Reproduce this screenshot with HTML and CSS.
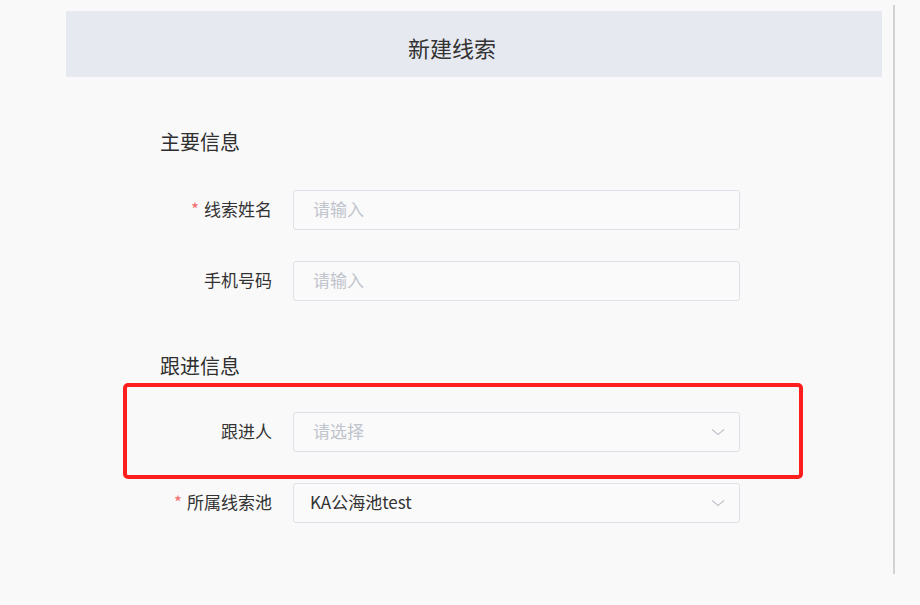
FILE: index.html
```html
<!DOCTYPE html>
<html lang="zh-CN">
<head>
    <meta charset="UTF-8">
    <meta name="viewport" content="width=device-width, initial-scale=1.0">
    <title>新建线索</title>
    <link rel="stylesheet" href="styles.css">
</head>
<body>

    <div class="panel">
        <div class="panel-header">
            <h1 class="title">新建线索</h1>
        </div>

        <div class="form">
            <h2 class="section-title">主要信息</h2>

            <div class="form-row">
                <label class="form-label"><span class="required">*</span>线索姓名</label>
                <div class="input">
                    <span class="placeholder">请输入</span>
                </div>
            </div>

            <div class="form-row">
                <label class="form-label">手机号码</label>
                <div class="input">
                    <span class="placeholder">请输入</span>
                </div>
            </div>

            <h2 class="section-title section-gap">跟进信息</h2>

            <div class="form-row">
                <label class="form-label">跟进人</label>
                <div class="input select">
                    <span class="placeholder">请选择</span>
                    <svg class="arrow" width="14" height="8" viewBox="0 0 14 8">
                        <path d="M1 1.5 L7 6.5 L13 1.5" fill="none" stroke="#c0c4cc" stroke-width="1.2"/>
                    </svg>
                </div>
            </div>

            <div class="form-row">
                <label class="form-label"><span class="required">*</span>所属线索池</label>
                <div class="input select">
                    <span class="value">KA公海池test</span>
                    <svg class="arrow" width="14" height="8" viewBox="0 0 14 8">
                        <path d="M1 1.5 L7 6.5 L13 1.5" fill="none" stroke="#c0c4cc" stroke-width="1.2"/>
                    </svg>
                </div>
            </div>
        </div>
    </div>

    <!-- annotation box drawn over the 跟进人 row -->
    <div class="highlight"></div>

</body>
</html>
```

FILE: styles.css
```css
* {
    margin: 0;
    padding: 0;
    box-sizing: border-box;
}

body {
    font-family: 'Noto Sans CJK SC', 'Noto Sans', sans-serif;
    background: #f9f9f9;
    color: #333;
    position: relative;
    width: 920px;
    height: 605px;
    overflow: hidden;
}

.panel {
    margin: 5px 0 0 10px;
    width: 885px;
    height: 569px;
    border-right: 2px solid #d2d2d2;
    padding-top: 6px;
}

.panel-header {
    margin: 0 11px 0 56px;
    height: 66px;
    background: #e7e9f0;
    display: flex;
    justify-content: center;
    align-items: center;
    padding: 6px 44px 0 0;
}

.title {
    font-size: 22px;
    font-weight: normal;
    color: #333;
    line-height: 30px;
}

.form {
    padding: 51px 0 0 150px;
}

.section-title {
    font-size: 20px;
    font-weight: normal;
    color: #2f2f2f;
    line-height: 28px;
    margin-bottom: 34px;
}

.section-gap {
    margin-top: 51px;
    margin-bottom: 32px;
}

.form-row {
    display: flex;
    align-items: center;
    height: 40px;
    margin-bottom: 31px;
}

.form-label {
    width: 133px;
    padding: 0 21px 3px 0;
    text-align: right;
    font-size: 17px;
    color: #333;
    white-space: nowrap;
}

.required {
    color: #f56c6c;
    margin-right: 5px;
}

.input {
    width: 447px;
    height: 40px;
    border: 1px solid #dfe1e8;
    border-radius: 3px;
    background: #fafafa;
    display: flex;
    align-items: center;
    padding: 0 14px 3px 19px;
    font-size: 17px;
}

.placeholder {
    color: #c0c4cc;
}

.value {
    color: #333;
    margin-left: -3px;
}

.select {
    justify-content: space-between;
}

.arrow {
    margin-top: 3px;
}

.highlight {
    position: absolute;
    left: 123px;
    top: 383px;
    width: 680px;
    height: 96px;
    border: 4px solid #fe1e1e;
    border-radius: 5px;
}
```
